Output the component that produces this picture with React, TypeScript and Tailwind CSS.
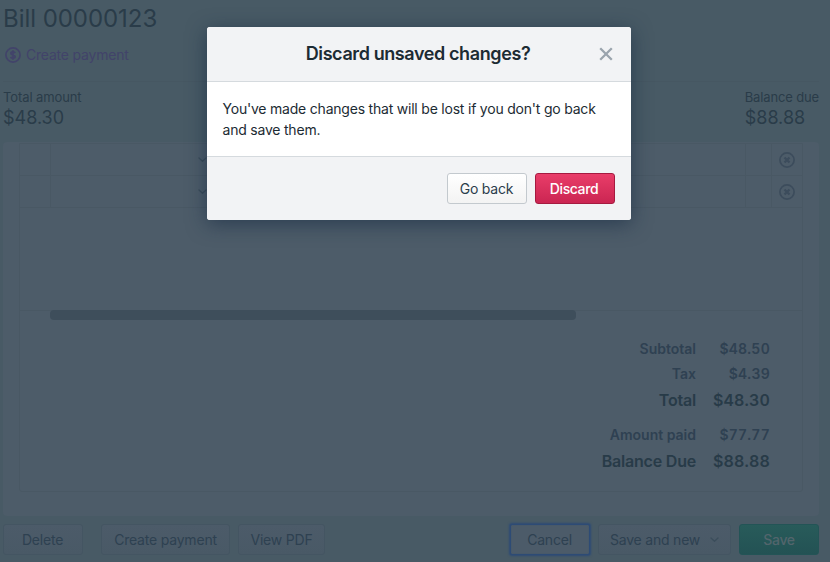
import React from "react";

const Chevron = ({ className = "" }: { className?: string }) => (
  <svg className={className} width="9" height="6" viewBox="0 0 9 6" fill="none" stroke="currentColor" strokeWidth="1.3" strokeLinecap="round" strokeLinejoin="round">
    <path d="M1 1l3.5 3.2L8 1" />
  </svg>
);

const RemoveIcon = () => (
  <svg width="16" height="16" viewBox="0 0 16 16" fill="none" stroke="currentColor">
    <circle cx="8" cy="8" r="7.1" strokeWidth="1.7" />
    <path d="M5.5 5.5l5 5M10.5 5.5l-5 5" strokeWidth="2.3" />
  </svg>
);

const LineRow = () => (
  <div className="flex h-8 border-b border-[#495864]">
    <div className="w-[31px] border-r border-[#495864]" />
    <div className="flex flex-1 items-center border-r border-[#495864] pl-[147px] text-[#3a4b59]">
      <Chevron />
    </div>
    <div className="w-[26px] border-r border-[#495864]" />
    <div className="flex w-[30px] items-center justify-center text-[#3c4c5c]">
      <RemoveIcon />
    </div>
  </div>
);

const totals = [
  { label: "Subtotal", value: "$48.50", strong: false, gap: "h-[25px]" },
  { label: "Tax", value: "$4.39", strong: false, gap: "h-[25px]" },
  { label: "Total", value: "$48.30", strong: true, gap: "h-[27px]" },
  { label: "Amount paid", value: "$77.77", strong: false, gap: "h-[25px] mt-[9px]" },
  { label: "Balance Due", value: "$88.88", strong: true, gap: "h-[27px]" },
];

const ghost = "flex h-[31px] items-center justify-center rounded-[3px] border border-[#445562] bg-linear-to-b from-[#4c5b69] to-[#495966] text-[14px] tracking-[-0.2px] text-[#2e4151]";

export default function App() {
  return (
    <div className="relative h-[562px] w-[830px] overflow-hidden bg-[#485a65] font-['Inter',sans-serif] text-[#2a3c49]">
      <div className="flex h-full flex-col pl-[3px] pr-[11px]">
        <h1 className="h-[38px] text-[24px] leading-[38px] tracking-[-0.05px]">Bill 00000123</h1>
        <div className="flex h-[43px] items-center pb-[9px] pl-[2px] text-[14px] text-[#42436a]">
          <svg width="16" height="16" viewBox="0 0 16 16" fill="none" stroke="currentColor">
            <circle cx="8" cy="8" r="7.1" strokeWidth="1.7" />
            <path d="M10.2 6C9.800 5.200 9 4.900 8 4.900c-1.200 0-2.100.5-2.100 1.500 0 2.100 4.300 1.100 4.300 3.200 0 1-.9 1.600-2.200 1.600-1.100 0-2-.4-2.400-1.200M8 3.300v9.400" strokeWidth="1.700" />
          </svg>
          <span className="-mt-px ml-[5px] tracking-[-0.2px]">Create payment</span>
        </div>
        <div className="flex h-[61px] justify-between border-t border-[#465762] pt-[6px]">
          <div>
            <div className="text-[13px] leading-[18px] tracking-[-0.1px]">Total amount</div>
            <div className="text-[18px] leading-[23px]">$48.30</div>
          </div>
          <div>
            <div className="text-[13px] leading-[18px] tracking-[-0.14px]">Balance due</div>
            <div className="text-[18px] leading-[23px]">$88.88</div>
          </div>
        </div>

        <div className="h-[374px] rounded-[4px] bg-[#4d5c69] pl-4 pr-4 pt-px">
          <div className="h-[349px] rounded-b-[3px] border border-[#495864]">
            <LineRow />
            <LineRow />
            <div className="h-[103px] border-b border-[#495864]" />
            <div className="-mt-px ml-[30px] h-[10px] w-[526px] rounded-[4px] bg-[#3e4e5b]" />
            <div className="mt-4 pr-8">
              {totals.map((t) => (
                <div key={t.label} className={`flex items-center justify-end font-semibold ${t.gap} ${t.strong ? "text-[16px] text-[#283b48]" : "text-[14px] text-[#2f4152]"}`}>
                  <span className={t.strong ? "tracking-[-0.2px]" : "tracking-[0px]"}>{t.label}</span>
                  <span className={`w-[74px] text-right tabular-nums ${t.strong ? "tracking-[0.15px]" : "tracking-[0.25px]"}`}>{t.value}</span>
                </div>
              ))}
            </div>
          </div>
        </div>

        <div className="mt-2 flex">
          <div className={`${ghost} w-20 pr-px`}>Delete</div>
          <div className={`${ghost} ml-[18px] w-[129px]`}>Create payment</div>
          <div className={`${ghost} ml-2 w-[87px]`}>View PDF</div>
          <div className="ml-auto flex h-[31px] w-20 items-center justify-center rounded-[2px] border border-[#2d4b75] bg-[#4c5b69] pr-px text-[14px] tracking-[-0.2px] text-[#2e4151] shadow-[0_0_2px_1px_#2d4b75,inset_0_0_1px_#2d4b75]">Cancel</div>
          <div className={`${ghost} ml-2 w-[133px]`}>
            <span>Save and new</span>
            <Chevron className="ml-[10px] text-[#3b4d5b]" />
          </div>
          <div className="ml-2 flex h-[31px] w-20 items-center justify-center rounded-[3px] border border-[#235456] bg-linear-to-b from-[#285b5a] to-[#235254] text-[14px] font-medium tracking-[-0.3px] text-[#52656c]">Save</div>
        </div>
      </div>

      <div className="absolute left-[207px] top-[27px] flex h-[193px] w-[424px] flex-col overflow-hidden rounded-[3px] bg-white text-[#1c2b33] shadow-[0_4px_20px_rgba(20,40,65,0.6)]">
        <div className="flex h-[55px] items-center border-b border-[#d5dade] bg-[#f2f3f5] pl-[30px] pr-[18px]">
          <h2 className="-mt-[2px] flex-1 text-center text-[18px] font-semibold tracking-[-0.4px]">Discard unsaved changes?</h2>
          <svg width="14" height="14" viewBox="0 0 14 14" fill="none" stroke="#9aa4ad" strokeWidth="2.3">
            <path d="M1.200 1.200l11.600 11.600M12.800 1.200L1.200 12.800" />
          </svg>
        </div>
        <div className="flex-1 px-[15.5px] pt-4 text-[14px] leading-[21px] tracking-[-0.21px]">
          You've made changes that will be lost if you don't go back
          <br />
          and save them.
        </div>
        <div className="flex h-16 justify-end border-t border-[#d5dade] bg-[#f2f3f5] pr-4 pt-4">
          <div className="flex h-[31px] w-20 items-center justify-center rounded-[3px] border border-[#c3c9ce] bg-linear-to-b from-white to-[#f3f3f3] pr-px text-[14px] tracking-[-0.2px] text-[#2b3d4c]">Go back</div>
          <div className="ml-2 flex h-[31px] w-20 items-center justify-center rounded-[3px] border border-[#a61a40] bg-linear-to-b from-[#e93d69] to-[#cb2552] pr-[2px] text-[14px] font-medium tracking-[-0.4px] text-white">Discard</div>
        </div>
      </div>
    </div>
  );
}
